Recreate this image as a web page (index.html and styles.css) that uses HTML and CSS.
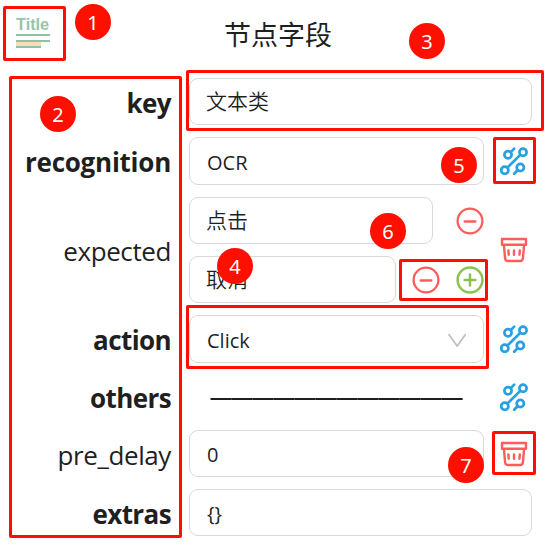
FILE: index.html
```html
<!DOCTYPE html>
<html lang="zh">
<head>
<meta charset="utf-8">
<title>节点字段</title>
<link rel="stylesheet" href="styles.css">
</head>
<body>
<svg class="defs" width="0" height="0">
  <symbol id="link" viewBox="0 0 28 28"><g fill="none" stroke="#28a0e2" stroke-width="2.7" stroke-linecap="round"><circle cx="8" cy="7.8" r="3.6"/><circle cx="23" cy="5.2" r="3.6"/><circle cx="4.8" cy="23.2" r="3.6"/><circle cx="20.3" cy="20.5" r="3.6"/><path d="M7.5 20.5 20.3 7.9M10.8 5.1 14.2 1.6M17.5 23.3 14.2 26.7"/></g></symbol>
  <symbol id="minus" viewBox="0 0 28 28"><g fill="none" stroke="#ff5c5c" stroke-width="2.3" stroke-linecap="round"><circle cx="14" cy="14" r="12.4"/><path d="M8.6 14.5H19.4"/></g></symbol>
  <symbol id="plus" viewBox="0 0 28 28"><g fill="none" stroke="#8cc252" stroke-width="2.5" stroke-linecap="round"><circle cx="14" cy="14" r="12.4"/><path d="M8.6 14H19.4M14 8.6V19.4"/></g></symbol>
  <symbol id="trash" viewBox="0 0 28 28"><g fill="none" stroke="#ff5c5c" stroke-width="2.4" stroke-linecap="round" stroke-linejoin="round"><path d="M2 3H26V8.8H2ZM3.9 9 5.1 22.3Q5.4 25 8 25H20Q22.6 25 22.9 22.3L24.1 9M8.4 14.4 8.7 18.7M14 14.4V18.7M19.8 14.4 19.5 18.7"/></g></symbol>
</svg>
<main class="panel">
  <header class="header">
    <div class="logo"><span class="logo-text">Title</span><i class="bar"></i><i class="bar"></i><i class="bar short"></i></div>
    <h1>节点字段</h1>
  </header>
  <div class="row"><label class="bold">key</label><div class="input full cjk">文本类</div></div>
  <div class="row tall"><label class="bold recognition">recognition</label><div class="input">OCR</div><svg class="icon"><use href="#link"/></svg></div>
  <div class="row list"><label class="expected">expected</label>
    <div class="items">
      <div class="item"><div class="input cjk">点击</div><svg class="icon"><use href="#minus"/></svg></div>
      <div class="item"><div class="input cjk">取消</div><svg class="icon"><use href="#minus"/></svg><svg class="icon"><use href="#plus"/></svg></div>
    </div>
    <svg class="icon"><use href="#trash"/></svg></div>
  <div class="row tall"><label class="bold action">action</label><div class="input select">Click<svg class="chevron" viewBox="0 0 18 13"><path d="M1 .8 9.2 12 17.3.8"/></svg></div><svg class="icon"><use href="#link"/></svg></div>
  <div class="row short-row"><label class="bold others">others</label><div class="dashes">————————————</div><svg class="icon"><use href="#link"/></svg></div>
  <div class="row"><label class="delay">pre_delay</label><div class="input">0</div><svg class="icon"><use href="#trash"/></svg></div>
  <div class="row"><label class="bold extras">extras</label><div class="input full">{}</div></div>
</main>
<div class="frame f1"></div><div class="frame f2"></div><div class="frame f3"></div><div class="frame f4"></div><div class="frame f5"></div><div class="frame f6"></div><div class="frame f7"></div>
<b class="badge b1">1</b><b class="badge b2">2</b><b class="badge b3">3</b><b class="badge b4">4</b><b class="badge b5">5</b><b class="badge b6">6</b><b class="badge b7">7</b>
</body>
</html>
```
FILE: styles.css
```css
* { box-sizing: border-box; }
body { margin: 0; width: 559px; height: 553px; overflow: hidden; position: relative; background: #fff; color: #1f1f1f; font-family: "Open Sans", "Noto Sans CJK SC", sans-serif; }
.defs { position: absolute; }
.panel { display: flex; flex-direction: column; gap: 12px; }
.header { height: 66px; display: grid; grid-template-columns: 208px 140px; padding: 15px 0 0 16px; }
.logo { display: flex; flex-direction: column; width: 34px; color: #96c5ab; }
.logo-text { font: bold 16.3px/18px "Liberation Sans", sans-serif; height: 19px; }
.bar { height: 2px; background: #8fc2a5; margin-bottom: 4px; flex: none; }
.bar.short { width: 25px; height: 6px; margin-top: -4px; border-top: 4px solid #ffdcb8; }
h1 { margin: 0; font: 400 27px/38px "Noto Sans CJK SC", sans-serif; color: #1f1f1f; }
.row { display: flex; align-items: center; height: 47px; }
.row.tall { height: 48px; }
.row.list { height: 106px; }
.short-row { height: 43px; }
label { width: 171px; margin-right: 18px; flex: none; text-align: right; font-size: 26px; line-height: 34px; padding-top: 2px; white-space: nowrap; letter-spacing: -.4px; }
label.bold { font-weight: 700; letter-spacing: -.6px; }
label.recognition { letter-spacing: -.25px; }
.input { width: 295px; height: 100%; border: 1px solid #d9d9d9; border-radius: 9px; padding: 2px 17px 0; display: flex; align-items: center; font-size: 20px; background: #fff; }
.input.full { width: 343px; }
.input.cjk { padding: 0 16px 3px; font-family: "Noto Sans CJK SC", sans-serif; font-size: 21px; font-weight: 350; }
.icon { width: 28px; height: 28px; flex: none; margin-left: 16px; }
.items { width: 295px; display: flex; flex-direction: column; gap: 12px; }
.item { display: flex; align-items: center; height: 47px; }
.item .input { flex: 1; }
.item:first-child .icon { margin-left: 23px; }
.select { justify-content: space-between; }
.chevron { width: 18px; height: 13px; fill: none; stroke: #bfbfbf; stroke-width: 1.8; stroke-linecap: round; }
.dashes { width: 295px; text-align: center; font: bold 21px/28px "Liberation Sans", sans-serif; }
.frame { position: absolute; border: 3px solid #ff0f00; border-radius: 2px; }
.f1 { left: 3px; top: 6px; width: 63px; height: 55px; }
.f2 { left: 9px; top: 76px; width: 173px; height: 462px; }
.f3 { left: 186px; top: 70px; width: 358px; height: 61px; }
.f4 { left: 186px; top: 305px; width: 303px; height: 64px; }
.f5 { left: 493px; top: 137px; width: 43px; height: 47px; }
.f6 { left: 399px; top: 259px; width: 89px; height: 42px; }
.f7 { left: 492px; top: 431px; width: 44px; height: 44px; }
.badge { position: absolute; width: 36px; height: 36px; border-radius: 50%; background: #ff0f00; color: #fff; font: 400 20px/37px "Noto Sans", sans-serif; text-align: center; }
.b1 { left: 75px; top: 4px; }
.b2 { left: 40px; top: 96px; }
.b3 { left: 409px; top: 23px; }
.b4 { left: 217px; top: 248px; }
.b5 { left: 441px; top: 147px; }
.b6 { left: 370px; top: 213px; }
.b7 { left: 448px; top: 447px; }
```
